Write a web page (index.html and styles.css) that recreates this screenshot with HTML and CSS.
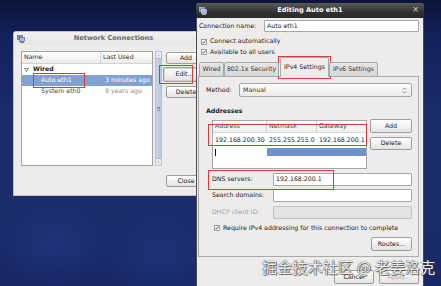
FILE: index.html
```html
<!DOCTYPE html>
<html>
<head>
<meta charset="utf-8">
<title>Network Connections</title>
<link rel="stylesheet" href="styles.css">
</head>
<body>
<div class="desktop">

  <div class="win nc">
    <div class="nc-title">
      <svg class="wicon" width="8" height="8" viewBox="0 0 8 8"><rect x="0.5" y="0.5" width="5" height="4" fill="#7f98bf" stroke="#4b5a74" stroke-width="0.6"/><rect x="2.5" y="2.5" width="5" height="4" fill="#a8bcd9" stroke="#4b5a74" stroke-width="0.6"/><rect x="3" y="7" width="4" height="0.8" fill="#4b5a74"/></svg>
      <span>Network Connections</span>
    </div>
    <div class="nc-body">
      <div class="nc-main">
        <div class="list">
          <div class="list-head"><span class="col-name">Name</span><span class="col-used">Last Used</span></div>
          <div class="list-row group"><svg class="tri" width="5" height="4" viewBox="0 0 5 4"><polygon points="0.5,0.5 4.5,0.5 2.5,3.5" fill="none" stroke="#555" stroke-width="0.7"/></svg><b>Wired</b></div>
          <div class="list-row sel"><span class="col-name ind">Auto eth1</span><span class="col-used">3 minutes ago</span></div>
          <div class="list-row"><span class="col-name ind">System eth0</span><span class="col-used dim">9 years ago</span></div>
        </div>
        <div class="vscroll">
          <svg class="sarrow" width="7" height="6" viewBox="0 0 7 6"><polyline points="2,4 3.5,2.5 5,4" fill="none" stroke="#7a8aa5" stroke-width="0.7"/></svg>
          <div class="thumb"><i></i><i></i><i></i></div>
          <svg class="sarrow" width="7" height="6" viewBox="0 0 7 6"><polyline points="2,2 3.5,3.5 5,2" fill="none" stroke="#7a8aa5" stroke-width="0.7"/></svg>
        </div>
        <div class="nc-buttons">
          <button class="btn b-add1">Add</button>
          <button class="btn b-edit">Edit...</button>
          <button class="btn b-del1">Delete</button>
        </div>
      </div>
      <div class="nc-foot"><button class="btn b-close">Close</button></div>
    </div>
  </div>

  <div class="win ed">
    <div class="ed-title">
      <svg class="ticon" width="8" height="8" viewBox="0 0 8 8"><rect x="0.5" y="0.5" width="5" height="4" fill="#7f98bf" stroke="#c9d3e3" stroke-width="0.6"/><rect x="2.5" y="2.5" width="5" height="4" fill="#a8bcd9" stroke="#c9d3e3" stroke-width="0.6"/><rect x="3" y="7" width="4" height="0.8" fill="#c9d3e3"/></svg>
      <span class="ed-title-text">Editing Auto eth1</span>
      <span class="close-x">×</span>
    </div>
    <div class="ed-body">
      <div class="name-row"><span class="lbl-name">Connection name:</span><div class="entry name-entry">Auto eth1</div></div>
      <div class="chk-row r1"><svg class="chk" width="6" height="6" viewBox="0 0 6 6"><rect x="0.5" y="0.5" width="5" height="5" fill="#fff" stroke="#7c7c7c" stroke-width="0.7"/><polyline points="1.5,3 2.6,4.2 4.6,1.5" fill="none" stroke="#222" stroke-width="0.8"/></svg><span>Connect automatically</span></div>
      <div class="chk-row r2"><svg class="chk" width="6" height="6" viewBox="0 0 6 6"><rect x="0.5" y="0.5" width="5" height="5" fill="#fff" stroke="#7c7c7c" stroke-width="0.7"/><polyline points="1.5,3 2.6,4.2 4.6,1.5" fill="none" stroke="#222" stroke-width="0.8"/></svg><span>Available to all users</span></div>
      <div class="tabs">
        <div class="tab t-wired">Wired</div>
        <div class="tab t-sec">802.1x Security</div>
        <div class="tab active t-v4">IPv4 Settings</div>
        <div class="tab t-v6">IPv6 Settings</div>
      </div>
      <div class="panel">
        <div class="method-row">
          <span class="lbl-method">Method:</span>
          <div class="combo"><span>Manual</span><svg width="5" height="7" viewBox="0 0 5 7"><polyline points="1,2.5 2.5,1 4,2.5" fill="none" stroke="#555" stroke-width="0.7"/><polyline points="1,4.5 2.5,6 4,4.5" fill="none" stroke="#555" stroke-width="0.7"/></svg></div>
        </div>
        <div class="section-title">Addresses</div>
        <div class="addr-block">
          <div class="addr-table">
            <div class="at-head"><span class="c1">Address</span><span class="c2">Netmask</span><span class="c3">Gateway</span></div>
            <div class="at-row"><span class="c1">192.168.200.30</span><span class="c2">255.255.255.0</span><span class="c3">192.168.200.1</span></div>
            <div class="at-row edit"><span class="c1"><i class="caret"></i></span><span class="c2 blue"></span><span class="c3 blue"></span></div>
          </div>
          <div class="addr-btns">
            <button class="btn b-add">Add</button>
            <button class="btn b-del">Delete</button>
          </div>
        </div>
        <div class="field-row f-dns"><span class="flbl">DNS servers:</span><div class="entry">192.168.200.1</div></div>
        <div class="field-row f-search"><span class="flbl">Search domains:</span><div class="entry"></div></div>
        <div class="field-row f-dhcp"><span class="flbl dis">DHCP client ID:</span><div class="entry disabled"></div></div>
        <div class="chk-row req"><svg class="chk" width="6" height="6" viewBox="0 0 6 6"><rect x="0.5" y="0.5" width="5" height="5" fill="#fff" stroke="#7c7c7c" stroke-width="0.7"/><polyline points="1.5,3 2.6,4.2 4.6,1.5" fill="none" stroke="#222" stroke-width="0.8"/></svg><span>Require IPv4 addressing for this connection to complete</span></div>
        <div class="routes-row"><button class="btn b-routes">Routes...</button></div>
      </div>
      <div class="dlg-btns"><button class="btn b-cancel">Cancel</button><button class="btn b-apply">Apply...</button></div>
    </div>
  </div>

  <div class="mark m-auto"></div>
  <div class="mark m-edit"></div>
  <div class="mark m-tab"></div>
  <div class="mark m-addr"></div>
  <div class="mark m-dns"></div>

  <div class="watermark">掘金技术社区 @ 老姜洛克</div>
</div>
</body>
</html>
```

FILE: styles.css
```css
* { box-sizing: border-box; margin: 0; padding: 0; }
html, body { width: 441px; height: 286px; overflow: hidden; }
body {
  font-family: "DejaVu Sans", "Noto Sans CJK SC", sans-serif;
  font-size: 6.25px;
  line-height: 1;
  color: #1e1e1e;
  background: #1a2b6a;
}
.desktop {
  position: relative;
  width: 441px;
  height: 286px;
  overflow: hidden;
  background:
    radial-gradient(ellipse 60px 40px at 55px 245px, rgba(40,62,140,0.45), rgba(40,62,140,0) 100%),
    radial-gradient(ellipse 60px 45px at 160px 255px, rgba(40,62,140,0.4), rgba(40,62,140,0) 100%),
    linear-gradient(180deg, #0c1538 0%, #13215a 12%, #1a2c6c 40%, #1b2d6d 70%, #172766 100%);
}

/* generic buttons */
.btn {
  font: inherit;
  color: #222;
  border: 1px solid #9e9d9b;
  border-radius: 2px;
  background: linear-gradient(#fefefe, #e4e3e1);
  display: flex;
  align-items: center;
  justify-content: center;
}

/* ---------- Network Connections window ---------- */
.win { position: absolute; }
.nc {
  left: 13px;
  top: 31px;
  width: 201px;
  height: 165px;
  background: #edecea;
  border: 1px solid #c3c2bf;
  border-radius: 3px 3px 0 0;
  display: flex;
  flex-direction: column;
}
.nc-title {
  height: 13px;
  flex: none;
  display: flex;
  align-items: center;
  justify-content: center;
  font-weight: bold;
  font-size: 6.6px;
  color: #6b6b6b;
  position: relative;
  background: linear-gradient(#f2f1ef, #e6e5e3);
}
.nc-title .wicon { position: absolute; left: 3px; top: 3px; }
.nc-body { padding: 6px 7px 0 7px; display: flex; flex-direction: column; }
.nc-main { display: flex; align-items: flex-start; height: 115px; }
.list {
  width: 132px;
  height: 115px;
  background: #fff;
  border: 1px solid #a3a3a3;
  flex: none;
}
.list-head {
  height: 12px;
  display: flex;
  align-items: center;
  background: linear-gradient(#ffffff, #ecebea);
  border-bottom: 1px solid #d2d2d2;
  color: #333;
}
.list-head .col-name { width: 79px; padding-left: 2px; border-right: 1px solid #cfcfcf; height: 100%; display: flex; align-items: center; }
.list-head .col-used { padding-left: 2px; }
.list-row { height: 11px; display: flex; align-items: center; color: #444; }
.list-row.group { padding-left: 2px; color: #222; }
.list-row.group .tri { margin-right: 4px; }
.list-row .col-name { width: 81px; }
.list-row .ind { padding-left: 19px; }
.list-row .col-used { padding-left: 2px; }
.list-row .dim { color: #8d8d8d; }
.list-row.sel { background: #7fa2d3; color: #fff; }

.vscroll {
  width: 7px;
  height: 115px;
  margin-left: 2px;
  display: flex;
  flex-direction: column;
  border: 1px solid #b9c3d3;
  background: #e8ecf2;
  flex: none;
}
.vscroll .sarrow { flex: none; width: 5px; height: 6px; }
.vscroll .thumb {
  flex: 1;
  background: linear-gradient(90deg, #c8d5ea, #b3c6e3);
  border-top: 1px solid #a9b9d3;
  border-bottom: 1px solid #a9b9d3;
  display: flex;
  flex-direction: column;
  align-items: center;
  justify-content: center;
  gap: 1px;
}
.vscroll .thumb i { display: block; width: 3px; height: 0.6px; background: #8194b5; }

.nc-buttons { margin-left: 4px; display: flex; flex-direction: column; }
.b-add1 { width: 40px; height: 12px; margin-top: 1px; }
.b-edit { width: 43px; height: 15px; margin-top: 3px; margin-left: -3px; box-shadow: inset 0 0 0 1px #d4d4d4; }
.b-del1 { width: 40px; height: 12px; margin-top: 4px; }
.nc-foot { display: flex; justify-content: flex-end; margin-top: 9px; }
.b-close { width: 40px; height: 12px; }

/* ---------- Editing window ---------- */
.ed {
  left: 196px;
  top: 3px;
  width: 228px;
  height: 290px;
  background: #edecea;
  border: 1px solid #4b4b4b;
  border-top: none;
  border-radius: 3px 3px 0 0;
}
.ed-title {
  height: 15px;
  margin: 0 -1px;
  background: linear-gradient(#5a5a5a, #323232 60%, #2a2a2a);
  border-radius: 3px 3px 0 0;
  color: #fff;
  font-weight: bold;
  font-size: 6.6px;
  display: flex;
  align-items: center;
  justify-content: center;
  position: relative;
}
.ed-title .ticon { position: absolute; left: 3px; top: 4px; }
.ed-title .close-x { position: absolute; right: 5px; top: 3px; font-size: 8px; font-weight: normal; color: #d8d8d8; }
.ed-body { padding: 2px 4px 0 1px; }

.name-row { display: flex; align-items: center; height: 12px; }
.lbl-name { width: 66px; padding-left: 1px; color: #222; }
.entry {
  height: 100%;
  flex: 1;
  background: #fff;
  border: 1px solid #a6a6a6;
  border-radius: 1px;
  display: flex;
  align-items: center;
  padding-left: 2px;
  color: #222;
}
.entry.disabled { background: #e5e4e2; border-color: #c2c1bf; }

.chk-row { display: flex; align-items: center; color: #222; }
.chk-row .chk { flex: none; margin-right: 3px; }
.r1 { margin-top: 4px; height: 11px; padding-left: 3px; }
.r2 { height: 10px; padding-left: 3px; }

.tabs { height: 19px; display: flex; align-items: flex-end; padding-left: 1px; position: relative; z-index: 1; }
.tab {
  height: 14px;
  display: flex;
  align-items: center;
  justify-content: center;
  border: 1px solid #a9a9a9;
  border-bottom: none;
  background: linear-gradient(#e6e5e3, #d9d8d6);
  color: #333;
  border-radius: 2px 2px 0 0;
}
.t-wired { width: 25px; }
.t-sec { width: 55px; }
.t-v4 { width: 49px; }
.t-v6 { width: 49px; }
.tab.active {
  height: 20px;
  margin-bottom: -1px;
  margin-left: 1px;
  background: #edecea;
  color: #1e1e1e;
}

.panel {
  height: 181px;
  border: 1px solid #a9a9a9;
  background: #edecea;
  padding: 6px 6px 0 7px;
  display: flex;
  flex-direction: column;
}
.method-row { display: flex; align-items: center; height: 14px; }
.lbl-method { width: 33px; padding-left: 0; color: #222; }
.combo {
  flex: 1;
  height: 100%;
  display: flex;
  align-items: center;
  justify-content: space-between;
  padding: 0 4px 0 3px;
  border: 1px solid #a6a6a6;
  border-radius: 2px;
  background: linear-gradient(#fdfdfd, #ebeae8);
  color: #333;
}
.section-title { margin-top: 9px; height: 11px; display: flex; align-items: center; font-weight: bold; color: #222; }

.addr-block { margin-top: 3px; margin-left: 6px; display: flex; align-items: flex-start; }
.addr-table { width: 155px; height: 49px; background: #fff; border: 1px solid #a6a6a6; flex: none; }
.at-head { height: 12px; display: flex; background: linear-gradient(#ffffff, #efeeec); border-bottom: 1px solid #d6d6d6; color: #444; }
.at-head span { display: flex; align-items: center; }
.at-head .c1, .at-head .c2 { border-right: 1px solid #d0d0d0; }
.at-row { display: flex; height: 15px; color: #222; }
.at-row span { display: flex; align-items: center; }
.c1 { width: 54px; padding-left: 2px; }
.c2 { width: 50px; padding-left: 2px; }
.c3 { width: 49px; padding-left: 2px; }
.at-row.edit { height: 8px; }
.at-row .blue { background: #6f93c9; }
.caret { display: block; width: 1px; height: 7px; background: #111; }
.addr-btns { margin-left: 3px; display: flex; flex-direction: column; }
.b-add { width: 42px; height: 14px; margin-top: -1px; }
.b-del { width: 42px; height: 13px; margin-top: 4px; }

.field-row { display: flex; align-items: center; height: 13px; margin-left: 6px; }
.flbl { width: 61px; color: #222; }
.flbl.dis { color: #a3a3a3; }
.f-dns { margin-top: 4px; }
.f-search { margin-top: 3px; }
.f-dhcp { margin-top: 4px; }
.entry { padding-left: 2px; }

.req { margin-top: 4px; height: 10px; padding-left: 8px; }
.routes-row { margin-top: 4px; display: flex; justify-content: flex-end; }
.b-routes { width: 41px; height: 14px; }

.dlg-btns { margin-top: 13px; display: flex; justify-content: flex-end; gap: 5px; padding-right: 0; }
.b-cancel, .b-apply { width: 40px; height: 14px; }
.b-apply { color: #a8a8a8; }

/* ---------- red annotation boxes ---------- */
.mark { position: absolute; border: 1.5px solid #dc3a38; }
.m-auto { left: 33px; top: 73px; width: 52px; height: 15px; }
.m-edit { left: 159px; top: 65px; width: 34px; height: 19px; }
.m-tab { left: 278px; top: 56px; width: 53px; height: 23px; }
.m-addr { left: 208px; top: 124px; width: 159px; height: 22px; }
.m-dns { left: 208px; top: 170px; width: 126px; height: 20px; }

/* ---------- watermark ---------- */
.watermark {
  position: absolute;
  left: 262px;
  top: 259px;
  font-family: "Noto Sans CJK SC", sans-serif;
  font-size: 15px;
  line-height: 1;
  color: rgba(255,255,255,0.92);
  white-space: nowrap;
  letter-spacing: 0.2px;
  text-shadow: 0 0 1px #444, 0 0 1px #444, 1px 1px 0 rgba(60,60,60,0.6);
}
```
